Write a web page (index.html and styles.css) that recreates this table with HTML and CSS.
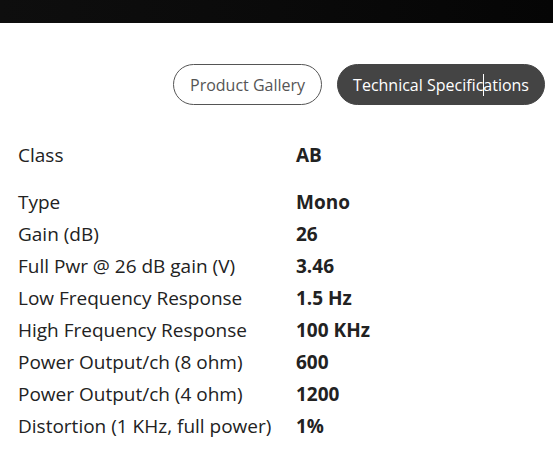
FILE: index.html
```html
<!DOCTYPE html>
<html>
<head>
<meta charset="utf-8">
<link rel="stylesheet" href="styles.css">
</head>
<body>
<div class="topbar"></div>
<div class="tabs">
  <button class="tab">Product Gallery</button>
  <button class="tab active">Technical Specific<span class="caret"></span>ations</button>
</div>
<div class="specs">
  <div class="row first"><span class="label">Class</span><span class="value">AB</span></div>
  <div class="row"><span class="label">Type</span><span class="value">Mono</span></div>
  <div class="row"><span class="label">Gain (dB)</span><span class="value">26</span></div>
  <div class="row"><span class="label">Full Pwr @ 26 dB gain (V)</span><span class="value">3.46</span></div>
  <div class="row"><span class="label">Low Frequency Response</span><span class="value">1.5 Hz</span></div>
  <div class="row"><span class="label">High Frequency Response</span><span class="value">100 KHz</span></div>
  <div class="row"><span class="label">Power Output/ch (8 ohm)</span><span class="value">600</span></div>
  <div class="row"><span class="label">Power Output/ch (4 ohm)</span><span class="value">1200</span></div>
  <div class="row"><span class="label">Distortion (1 KHz, full power)</span><span class="value">1%</span></div>
</div>
</body>
</html>
```
FILE: styles.css
```css
html, body {
  margin: 0;
  padding: 0;
  background: #fff;
  font-family: "Open Sans", "DejaVu Sans", sans-serif;
  color: #222;
}
.topbar {
  height: 23px;
  background: linear-gradient(90deg, #0e0e0e, #0a0a0a 50%, #050505);
}
.tabs {
  display: flex;
  justify-content: flex-end;
  gap: 15px;
  padding: 41px 8px 0 0;
}
.tab {
  height: 41px;
  border-radius: 21px;
  border: 1px solid #555;
  background: #fff;
  color: #555;
  font-family: inherit;
  font-size: 16px;
  padding: 0 16px;
  box-sizing: border-box;
}
.tab.active {
  background: #444;
  color: #fff;
  border-color: #444;
  padding: 0 15px;
}
.caret {
  display: inline-block;
  width: 1px;
  height: 22px;
  margin-right: -1px;
  background: #fff;
  vertical-align: -5px;
}
.specs {
  padding: 34px 0 0 18px;
}
.row {
  display: flex;
  height: 32px;
  align-items: center;
  font-size: 19px;
}
.row.first {
  margin-bottom: 15px;
}
.label {
  width: 278px;
  color: #222;
}
.value {
  font-weight: 700;
  color: #222;
}
```
